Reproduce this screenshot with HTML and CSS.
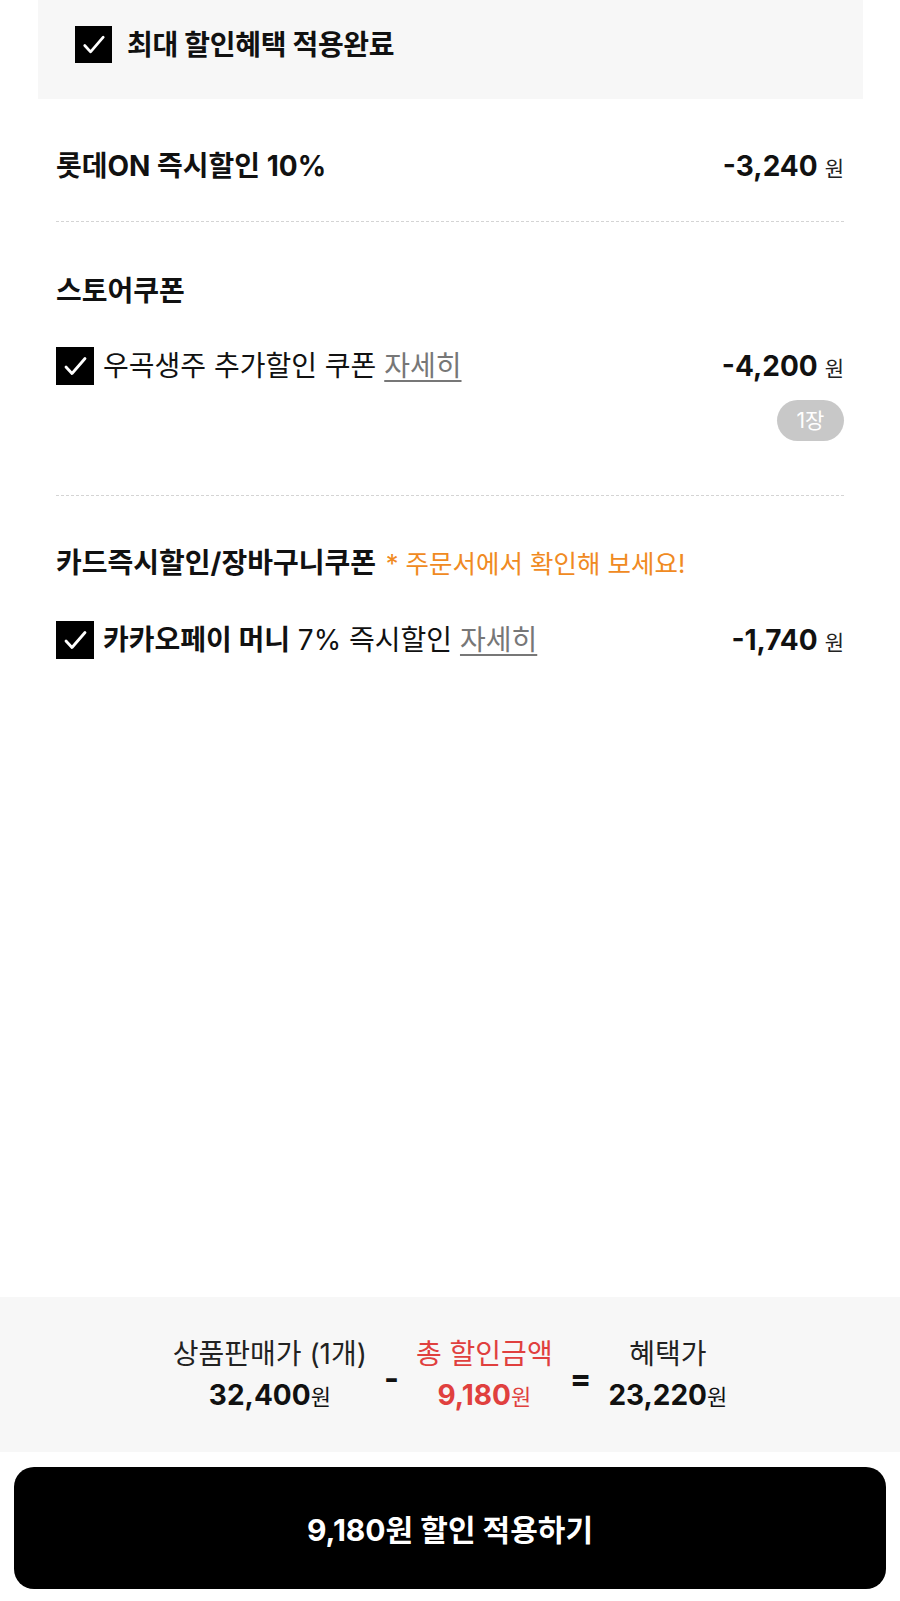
FILE: index.html
```html
<!DOCTYPE html>
<html lang="ko">
<head>
<meta charset="utf-8">
<title>할인혜택</title>
<link rel="stylesheet" href="styles.css">
</head>
<body>
<div class="page">
  <div class="top-box">
    <span class="cb cb-lg"><svg viewBox="0 0 38 38" width="37" height="37"><polyline points="10,20 16,26.5 29,11.5" fill="none" stroke="#fff" stroke-width="2.8" stroke-linecap="round" stroke-linejoin="round"/></svg></span>
    <span class="top-title">최대 할인혜택 적용완료</span>
  </div>

  <div class="content">
    <section class="sec sec1">
      <div class="row">
        <span class="strong">롯데ON 즉시할인 10%</span>
        <span class="amt"><b>-3,240</b><span class="won">원</span></span>
      </div>
    </section>

    <section class="sec sec2">
      <h3 class="sec-title">스토어쿠폰</h3>
      <div class="row row-gap">
        <span class="item">
          <span class="cb"><svg viewBox="0 0 38 38" width="38" height="38"><polyline points="10,20 16,26.5 29,11.5" fill="none" stroke="#fff" stroke-width="2.8" stroke-linecap="round" stroke-linejoin="round"/></svg></span>
          <span class="item-text">우곡생주 추가할인 쿠폰 <a class="more">자세히</a></span>
        </span>
        <span class="amt"><b>-4,200</b><span class="won">원</span></span>
      </div>
      <div class="badge-row"><span class="badge">1장</span></div>
    </section>

    <section class="sec sec3">
      <h3 class="sec-title">카드즉시할인/장바구니쿠폰 <span class="note">* 주문서에서 확인해 보세요!</span></h3>
      <div class="row row-gap">
        <span class="item">
          <span class="cb"><svg viewBox="0 0 38 38" width="38" height="38"><polyline points="10,20 16,26.5 29,11.5" fill="none" stroke="#fff" stroke-width="2.8" stroke-linecap="round" stroke-linejoin="round"/></svg></span>
          <span class="item-text"><b class="strong-inline">카카오페이 머니</b> 7% 즉시할인 <a class="more">자세히</a></span>
        </span>
        <span class="amt"><b>-1,740</b><span class="won">원</span></span>
      </div>
    </section>
  </div>

  <div class="summary">
    <div class="col">
      <span class="label">상품판매가 (1개)</span>
      <span class="val">32,400<span class="val-won">원</span></span>
    </div>
    <span class="op">-</span>
    <div class="col red">
      <span class="label">총 할인금액</span>
      <span class="val">9,180<span class="val-won">원</span></span>
    </div>
    <span class="op">=</span>
    <div class="col">
      <span class="label">혜택가</span>
      <span class="val">23,220<span class="val-won">원</span></span>
    </div>
  </div>

  <div class="btn-wrap">
    <button class="apply">9,180원 할인 적용하기</button>
  </div>
</div>
</body>
</html>
```

FILE: styles.css
```css
* { box-sizing: border-box; }

html, body {
  margin: 0;
  padding: 0;
  background: #fff;
}

body {
  font-family: Inter, "Noto Sans CJK KR", sans-serif;
  color: #111;
}

.page {
  width: 900px;
  height: 1601px;
  display: flex;
  flex-direction: column;
}

.top-box {
  margin: 0 37px 0 38px;
  height: 99px;
  background: #f7f7f7;
  padding: 26px 37px 0;
  display: flex;
  align-items: flex-start;
  gap: 15px;
}

.cb {
  flex: none;
  width: 38px;
  height: 38px;
  background: #000;
  display: flex;
  align-items: center;
  justify-content: center;
}

.cb-lg {
  width: 37px;
  height: 37px;
}

.top-title {
  font-size: 28px;
  font-weight: 700;
  line-height: 38px;
  letter-spacing: -0.3px;
}

.content {
  flex: 1;
  padding: 0 56px;
}

.sec {
  border-bottom: 1px dashed #d4d4d4;
}

.sec1 {
  padding: 47px 0 35px;
}

.sec2 {
  padding: 49px 0 54px;
}

.sec3 {
  padding: 47px 0 0;
  border-bottom: none;
}

.row {
  height: 40px;
  display: flex;
  align-items: center;
  justify-content: space-between;
}

.row-gap {
  margin-top: 36px;
}

.sec2 .row-gap {
  margin-top: 35px;
}

.strong {
  font-size: 28px;
  font-weight: 700;
  line-height: 40px;
}

.sec-title {
  margin: 0;
  font-size: 28px;
  font-weight: 700;
  line-height: 40px;
}

.note {
  font-weight: 400;
  color: #f08a22;
  font-size: 25.5px;
  margin-left: 3px;
}

.item {
  display: flex;
  align-items: center;
  gap: 9px;
}

.item-text {
  font-size: 28px;
  line-height: 40px;
}

.strong-inline {
  font-weight: 700;
}

.more {
  color: #777;
  text-decoration: underline;
  text-underline-offset: 4px;
  text-decoration-thickness: 1.5px;
}

.amt {
  display: flex;
  align-items: baseline;
  gap: 7px;
}

.amt b {
  font-size: 28px;
  font-weight: 700;
}

.won {
  font-size: 21px;
  font-weight: 400;
  color: #222;
}

.badge-row {
  display: flex;
  justify-content: flex-end;
  margin-top: 14px;
}

.badge {
  width: 67px;
  height: 41px;
  border-radius: 21px;
  background: #c8c8c8;
  color: #fff;
  font-size: 21px;
  line-height: 41px;
  text-align: center;
}

.summary {
  height: 155px;
  padding-top: 4px;
  background: #f7f7f7;
  display: flex;
  justify-content: center;
  align-items: center;
  gap: 17px;
}

.col {
  display: flex;
  flex-direction: column;
  align-items: center;
}

.label {
  font-size: 28px;
  line-height: 36px;
  color: #222;
}

.val {
  margin-top: 3px;
  font-size: 28px;
  font-weight: 700;
  line-height: 40px;
  color: #111;
}

.val-won {
  font-size: 22px;
  font-weight: 400;
}

.red .label,
.red .val {
  color: #e0403e;
}

.op {
  font-size: 32px;
  font-weight: 700;
  line-height: 40px;
  padding-top: 4px;
}

.btn-wrap {
  padding: 15px 14px 12px;
}

.apply {
  display: block;
  width: 100%;
  height: 122px;
  border: 0;
  border-radius: 20px;
  background: #000;
  color: #fff;
  font-family: Inter, "Noto Sans CJK KR", sans-serif;
  font-size: 30px;
  font-weight: 700;
}
```
